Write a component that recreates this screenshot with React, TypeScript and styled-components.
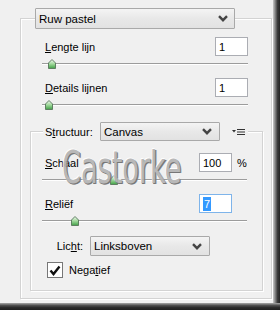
import styled, { createGlobalStyle } from "styled-components";

const GlobalStyle = createGlobalStyle`
  html, body {
    margin: 0;
    padding: 0;
    background: #f0f0f0;
  }
  body {
    font-family: "Liberation Sans", Arial, sans-serif;
    font-size: 11px;
    color: #000;
  }
`;

function Chevron() {
  return (
    <svg width="10" height="7" viewBox="0 0 10 7">
      <path d="M1 1.2 L5 5.2 L9 1.2" fill="none" stroke="#444" strokeWidth="2.4" />
    </svg>
  );
}

function MenuIcon() {
  return (
    <svg width="14" height="8" viewBox="0 0 14 8">
      <path d="M0 2 L4 2 L2 4.5 Z" fill="#333" />
      <path d="M5 1.5 H13 M5 4 H13 M5 6.5 H13" stroke="#333" strokeWidth="1" />
    </svg>
  );
}

function Thumb() {
  return (
    <svg width="8" height="10" viewBox="0 0 8 10">
      <defs>
        <linearGradient id="tg" x1="0" y1="0" x2="0" y2="1">
          <stop offset="0" stopColor="#f4fbf2" />
          <stop offset="0.5" stopColor="#9fd89a" />
          <stop offset="1" stopColor="#3f9f45" />
        </linearGradient>
      </defs>
      <path d="M0.5 4 L4 0.5 L7.5 4 L7.5 9.5 L0.5 9.5 Z" fill="url(#tg)" stroke="#5f7f62" strokeWidth="1" />
    </svg>
  );
}

function Key({ children }: { children: string }) {
  return <u>{children}</u>;
}

function Slider({ pos, inner }: { pos: number; inner?: boolean }) {
  return (
    <SliderBox $inner={inner}>
      <Track>
        <ThumbSpot style={{ left: pos }}>
          <Thumb />
        </ThumbSpot>
      </Track>
    </SliderBox>
  );
}

export default function App() {
  return (
    <>
      <GlobalStyle />
      <Frame>
        <Panel>
          <OuterGroup>
            <OuterHeader>
              <Select $w={200} $h={21} $pr={6}>
                <span>Ruw pastel</span>
                <Chevron />
              </Select>
            </OuterHeader>

            <OuterRow $top={8}>
              <Label>
                <Key>L</Key>engte lijn
              </Label>
              <Input>1</Input>
            </OuterRow>
            <Slider pos={6} />

            <OuterRow $top={8}>
              <Label>
                <Key>D</Key>etails lijnen
              </Label>
              <Input>1</Input>
            </OuterRow>
            <Slider pos={3} />

            <InnerGroup>
              <InnerHeader>
                <LegendLabel>
                  S<Key>t</Key>ructuur:
                </LegendLabel>
                <Select $w={120} $h={19} $pr={7}>
                  <span>Canvas</span>
                  <Chevron />
                </Select>
                <MenuSpot>
                  <MenuIcon />
                </MenuSpot>
              </InnerHeader>

              <InnerRow $top={12}>
                <Label>
                  <Key>S</Key>chaal
                </Label>
                <Input>100</Input>
                <Unit>%</Unit>
              </InnerRow>
              <Slider pos={68} inner />

              <InnerRow $top={8}>
                <Label>
                  <Key>R</Key>eliëf
                </Label>
                <Input $focus>
                  <Selected>7</Selected>
                </Input>
                <Unit />
              </InnerRow>
              <Slider pos={29} inner />

              <LightRow>
                <LightLabel>
                  Lic<Key>h</Key>t:
                </LightLabel>
                <Select $w={120} $h={20} $pr={7}>
                  <span>Linksboven</span>
                  <Chevron />
                </Select>
              </LightRow>

              <CheckRow>
                <CheckBox>
                  <svg width="12" height="11" viewBox="0 0 12 11">
                    <path d="M1.5 5.5 L4.5 9 L10.5 1.5" fill="none" stroke="#111" strokeWidth="2.4" />
                  </svg>
                </CheckBox>
                <span>
                  Nega<Key>t</Key>ief
                </span>
              </CheckRow>
            </InnerGroup>
          </OuterGroup>
          <Watermark>Castorke</Watermark>
        </Panel>
        <RightShade />
        <BottomShade />
      </Frame>
    </>
  );
}

const Frame = styled.div`
  display: grid;
  grid-template-columns: 273px 7px;
  grid-template-rows: 303px 7px;
  width: 280px;
  height: 310px;
`;

const Panel = styled.div`
  position: relative;
  overflow: hidden;
  background: #f0f0f0;
  padding: 18px 0 0 20px;
  box-sizing: border-box;
`;

const RightShade = styled.div`
  background: linear-gradient(to right, #c9c9c9, #7c7c7c 35%, #3a3a3a 65%, #242424);
`;

const BottomShade = styled.div`
  grid-column: 1 / span 2;
  background: linear-gradient(to bottom, #a8a8a8, #4e4e4e 35%, #2a2a2a 65%, #1f1f1f);
`;

const OuterGroup = styled.div`
  width: 252px;
  height: 281px;
  box-sizing: border-box;
  border: 1px solid #d3d3d3;
  box-shadow: 1px 1px 0 #fff, inset 1px 1px 0 #fff;
  display: flex;
  flex-direction: column;
`;

const OuterHeader = styled.div`
  display: flex;
  margin-top: -11px;
  padding-left: 14px;
`;

const Select = styled.div<{ $w: number; $h: number; $pr: number }>`
  width: ${(p) => p.$w}px;
  height: ${(p) => p.$h}px;
  box-sizing: border-box;
  border: 1px solid #a9a9a9;
  border-radius: 1px;
  background: linear-gradient(#f4f4f4, #e8e8e8 50%, #e2e2e2);
  display: flex;
  align-items: center;
  justify-content: space-between;
  padding: 0 ${(p) => p.$pr}px 0 3px;
  font-size: 11.5px;
`;

const OuterRow = styled.div<{ $top: number }>`
  display: flex;
  align-items: center;
  height: 19px;
  margin-top: ${(p) => p.$top}px;
  padding: 0 23px 0 24px;
`;

const InnerRow = styled.div<{ $top: number }>`
  display: flex;
  align-items: center;
  height: 19px;
  margin-top: ${(p) => p.$top}px;
  padding: 0 15px 0 14px;
`;

const Label = styled.span`
  flex: 1;
  font-size: 11px;
`;

const Input = styled.div<{ $focus?: boolean }>`
  width: 33px;
  height: 19px;
  box-sizing: border-box;
  background: #fff;
  border: 1px solid ${(p) => (p.$focus ? "#7eb4ea" : "#abadb3")};
  display: flex;
  align-items: center;
  padding-left: 3px;
  font-size: 11px;
`;

const Selected = styled.span`
  background: #3399ff;
  color: #fff;
  padding: 0 1px;
  line-height: 14px;
`;

const Unit = styled.span`
  width: 10px;
  margin-left: 5px;
  font-size: 11px;
`;

const SliderBox = styled.div<{ $inner?: boolean }>`
  height: 14px;
  padding: ${(p) => (p.$inner ? "0 15px 0 11px" : "0 23px 0 21px")};
  display: flex;
  flex-direction: column;
`;

const Track = styled.div`
  position: relative;
  margin-top: 7px;
  height: 1px;
  background: #9c9c9c;
  border-bottom: 1px solid #fff;
`;

const ThumbSpot = styled.div`
  position: absolute;
  top: -4px;
  width: 8px;
  height: 10px;
  display: flex;
`;

const InnerGroup = styled.div`
  margin: 20px 8px 0 9px;
  height: 160px;
  box-sizing: border-box;
  border: 1px solid #d3d3d3;
  box-shadow: 1px 1px 0 #fff, inset 1px 1px 0 #fff;
  display: flex;
  flex-direction: column;
`;

const InnerHeader = styled.div`
  display: flex;
  align-items: center;
  align-self: flex-start;
  margin: -10px 0 0 12px;
  padding: 0 1px 0 2px;
  background: #f0f0f0;
`;

const LegendLabel = styled.span`
  width: 55px;
  font-size: 11px;
`;

const MenuSpot = styled.span`
  display: flex;
  margin-left: 12px;
  width: 15px;
`;

const LightRow = styled.div`
  display: flex;
  align-items: center;
  margin-top: 9px;
  padding-left: 19px;
  gap: 7px;
`;

const LightLabel = styled.span`
  width: 33px;
  text-align: right;
  font-size: 11px;
`;

const CheckRow = styled.div`
  display: flex;
  align-items: center;
  margin-top: 6px;
  padding-left: 16px;
  gap: 6px;
  font-size: 11px;
`;

const CheckBox = styled.span`
  width: 16px;
  height: 16px;
  box-sizing: border-box;
  border: 1px solid #777;
  background: #fff;
  display: flex;
  align-items: center;
  justify-content: center;
`;

const Watermark = styled.div`
  position: absolute;
  left: 62px;
  top: 145px;
  font-family: "DejaVu Sans Condensed", "DejaVu Sans", sans-serif;
  font-size: 45px;
  line-height: 45px;
  color: #b4b4b4;
  opacity: 0.92;
  transform: scaleX(0.67);
  transform-origin: left top;
  text-shadow: 1px 1px 0 #6c6c6c, -1px -1px 0 #ffffff, 2px 1px 0 #8a8a8a;
  pointer-events: none;
  white-space: nowrap;
`;
